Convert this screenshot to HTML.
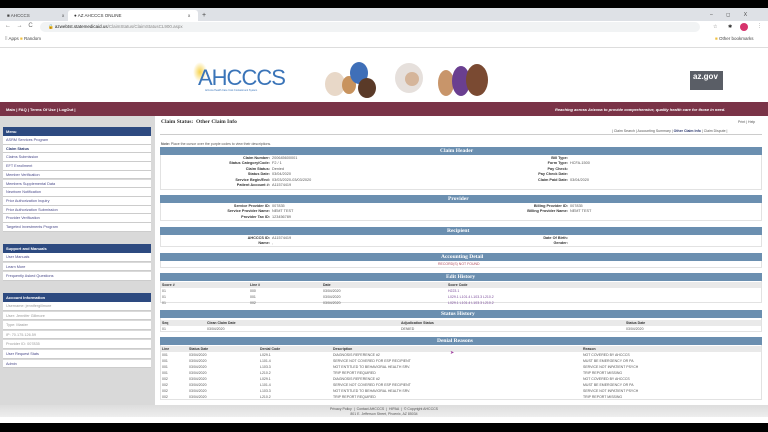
<!DOCTYPE html>
<html><head><meta charset="utf-8"><style>
*{margin:0;padding:0;box-sizing:border-box}
body{width:768px;height:432px;overflow:hidden;background:#fff;font-family:"Liberation Sans",sans-serif;position:relative;font-size:4px;color:#555}
div,span{position:absolute}
.b{font-weight:bold;color:#333}
.bar{left:160px;width:602px;height:8px;background:#6b8fb0;color:#fff;font-weight:bold;font-size:5.5px;line-height:8px;font-family:"Liberation Serif",serif}
.box{left:160px;width:602px;border:1px solid #e2e2e2;background:#fff}
.mh{left:3px;width:148px;background:#2d4a80;color:#fff;font-weight:bold;font-size:4px;line-height:9px;padding-left:3px}
.mi{left:3px;width:148px;height:8.7px;background:#fff;border-bottom:1px solid #ccc;color:#4a4a8a;font-size:3.8px;line-height:8px;padding-left:3px}
.gh{left:161px;width:600px;height:5.5px;background:#e9e9e9}
.r{text-align:right}
.red{color:#b05060}
.p{border-radius:50%}
</style></head><body>
<div style="left:0;top:0;width:768px;height:8px;background:#000"></div>
<div style="left:0;top:8px;width:768px;height:13px;background:#dee1e6"></div>
<div style="left:2px;top:10px;width:64px;height:11px;color:#444;font-size:4.5px;line-height:11px;padding-left:5px">■ AHCCCS</div>
<div style="left:62px;top:10px;font-size:4.5px;line-height:11px;color:#444">x</div>
<div style="left:68px;top:10px;width:130px;height:11px;background:#fff;border-radius:3px 3px 0 0;color:#333;font-size:4.5px;line-height:11px;padding-left:6px">● AZ AHCCCS ONLINE</div>
<div style="left:188px;top:10px;font-size:4.5px;line-height:11px;color:#444">x</div>
<div style="left:202px;top:10px;font-size:7px;line-height:11px;color:#444">+</div>
<div style="left:710px;top:10px;font-size:5px;line-height:11px;color:#444;word-spacing:12px">– ◻ X</div>
<div style="left:0;top:21px;width:768px;height:12px;background:#fff"></div>
<div style="left:5px;top:23px;font-size:6px;color:#666;word-spacing:4px">← → C</div>
<div style="left:40px;top:22px;width:660px;height:10px;background:#f1f3f4;border-radius:5px;font-size:4.5px;line-height:10px;padding-left:8px;color:#222">🔒 azwebtst.statemedicaid.us<span style="position:static;color:#888">/ClaimStatus/ClaimStatusCL900.aspx</span></div>
<div style="left:713px;top:24px;font-size:5px;color:#666">☆</div><div style="left:728px;top:24px;font-size:5px;color:#333">✱</div>
<div style="left:740px;top:23px;width:8px;height:8px;border-radius:50%;background:#d6336c"></div>
<div style="left:757px;top:23px;font-size:5px;color:#555">⋮</div>
<div style="left:5px;top:36px;font-size:4.5px;color:#444">⁞⁞ Apps <span style="position:static;color:#f0c040">■</span> Random</div>
<div style="left:715px;top:36px;font-size:4.5px;color:#444"><span style="position:static;color:#f0c040">■</span> Other bookmarks</div>
<div style="left:0;top:47px;width:768px;height:1px;background:#ddd"></div>
<!-- logos -->
<div style="left:193px;top:62px;width:14px;height:20px;border-radius:50%;background:radial-gradient(#f7d24a,#fff 70%)"></div>
<div style="left:198px;top:65px;font-size:22px;color:#3a74b8;letter-spacing:-1px">AHCCCS</div>
<div style="left:205px;top:89px;font-size:2.5px;color:#3a74b8">Arizona Health Care Cost Containment System</div>
<div class="p" style="left:325px;top:72px;width:20px;height:24px;background:#e8d8c8"></div>
<div class="p" style="left:342px;top:76px;width:14px;height:18px;background:#c8935e"></div>
<div class="p" style="left:350px;top:62px;width:18px;height:22px;background:#3f6fb8"></div>
<div class="p" style="left:358px;top:78px;width:18px;height:20px;background:#5a3a28"></div>
<div class="p" style="left:395px;top:63px;width:28px;height:30px;background:#e6e0dc"></div>
<div class="p" style="left:405px;top:72px;width:14px;height:14px;background:#d5b59a"></div>
<div class="p" style="left:438px;top:70px;width:16px;height:26px;background:#c8956a"></div>
<div class="p" style="left:452px;top:66px;width:18px;height:30px;background:#6a3f90"></div>
<div class="p" style="left:466px;top:64px;width:22px;height:32px;background:#7a4a32"></div>
<div style="left:690px;top:71px;width:33px;height:19px;background:#5a5e66;color:#fff;font-weight:bold;font-size:8px;line-height:12px;padding-left:3px;overflow:hidden">az.gov</div>
<div style="left:0;top:102px;width:768px;height:14px;background:#7a3347"></div>
<div style="left:6px;top:107px;color:#fff;font-size:4px;font-weight:bold">Main | FAQ | Terms Of Use | LogOut |</div>
<div style="left:555px;top:107px;color:#fff;font-size:4px;font-weight:bold;font-style:italic">Reaching across Arizona to provide comprehensive, quality health care for those in need.</div>
<!-- sidebar -->
<div style="left:0;top:116px;width:155px;height:290px;background:#d9d9d9"></div>
<div class="mh" style="top:127px">Menu</div>
<div class="mi" style="top:136px">ASRM Services Program</div>
<div class="mi" style="top:144.7px;font-weight:bold;color:#2d3a70">Claim Status</div>
<div class="mi" style="top:153.4px">Claims Submission</div>
<div class="mi" style="top:162.1px">EFT Enrollment</div>
<div class="mi" style="top:170.8px">Member Verification</div>
<div class="mi" style="top:179.5px">Members Supplemental Data</div>
<div class="mi" style="top:188.2px">Newborn Notification</div>
<div class="mi" style="top:196.9px">Prior Authorization Inquiry</div>
<div class="mi" style="top:205.6px">Prior Authorization Submission</div>
<div class="mi" style="top:214.3px">Provider Verification</div>
<div class="mi" style="top:223px">Targeted Investments Program</div>
<div class="mh" style="top:244px">Support and Manuals</div>
<div class="mi" style="top:253px">User Manuals</div>
<div class="mi" style="top:262.5px">Learn More</div>
<div class="mi" style="top:272px">Frequently Asked Questions</div>
<div class="mh" style="top:293px">Account Information</div>
<div class="mi" style="top:302px;color:#999">Username: jennifergillmore</div>
<div class="mi" style="top:311.6px;color:#999">User: Jennifer Gillmore</div>
<div class="mi" style="top:321.2px;color:#999">Type: Master</div>
<div class="mi" style="top:330.8px;color:#999">IP: 70.175.126.59</div>
<div class="mi" style="top:340.4px;color:#999">Provider ID: 007835</div>
<div class="mi" style="top:350px">User Request Stats</div>
<div class="mi" style="top:359.6px">Admin</div>
<!-- main -->
<div style="left:161px;top:119px;font-family:'Liberation Serif',serif;font-weight:bold;font-size:5.5px;color:#333">Claim Status:&nbsp; Other Claim Info</div>
<div style="left:160px;top:134px;width:602px;height:1px;background:#ccc"></div>
<div style="left:738px;top:120px;font-size:3.5px">Print | Help</div>
<div style="left:612px;top:129px;font-size:3.5px">| Claim Search | Accounting Summary | <b style="color:#2d3a70">Other Claim Info</b> | Claim Dispute |</div>
<div style="left:161px;top:142px;font-size:3.5px"><b>Note:</b> Place the cursor over the purple codes to view their descriptions.</div>
<div class="box" style="top:147px;height:43px"></div>
<div class="bar" style="top:147px;padding-left:280px">Claim Header</div>
<div class="r" style="left:160px;top:156px;width:110px;line-height:5.4px;font-size:3.8px"><b class="b">Claim Number:<br>Status Category/Code:<br>Claim Status:<br>Status Date:<br>Service Begin/End:<br>Patient Account #:</b></div>
<div style="left:272px;top:156px;line-height:5.4px;font-size:3.8px">200645600001<br>F2 / 1<br>Denied<br>03/04/2020<br>03/03/2020-03/03/2020<br>A11574419</div>
<div class="r" style="left:460px;top:156px;width:108px;line-height:5.4px;font-size:3.8px"><b class="b">Bill Type:<br>Form Type:<br>Pay Check:<br>Pay Check Date:<br>Claim Paid Date:</b></div>
<div style="left:570px;top:156px;line-height:5.4px;font-size:3.8px"><br>HCFA-1500<br><br><br>03/04/2020</div>
<div class="box" style="top:195px;height:26px"></div>
<div class="bar" style="top:195px;padding-left:288px">Provider</div>
<div class="r" style="left:160px;top:204px;width:110px;line-height:5.4px;font-size:3.8px"><b class="b">Service Provider ID:<br>Service Provider Name:<br>Provider Tax ID:</b></div>
<div style="left:272px;top:204px;line-height:5.4px;font-size:3.8px">007835<br>NEMT TEST<br>123456789</div>
<div class="r" style="left:460px;top:204px;width:108px;line-height:5.4px;font-size:3.8px"><b class="b">Billing Provider ID:<br>Billing Provider Name:</b></div>
<div style="left:570px;top:204px;line-height:5.4px;font-size:3.8px">007835<br>NEMT TEST</div>
<div class="box" style="top:227px;height:20px"></div>
<div class="bar" style="top:227px;padding-left:287px">Recipient</div>
<div class="r" style="left:160px;top:236px;width:110px;line-height:5.4px;font-size:3.8px"><b class="b">AHCCCS ID:<br>Name:</b></div>
<div style="left:272px;top:236px;line-height:5.4px;font-size:3.8px">A11574419<br>,</div>
<div class="r" style="left:460px;top:236px;width:108px;line-height:5.4px;font-size:3.8px"><b class="b">Date Of Birth:<br>Gender:</b></div>
<div class="box" style="top:253px;height:15px"></div>
<div class="bar" style="top:253px;padding-left:281px">Accounting Detail</div>
<div class="red" style="left:438px;top:262px;font-size:3.5px">RECORD(S) NOT FOUND</div>
<div class="box" style="top:273px;height:30px"></div>
<div class="bar" style="top:273px;padding-left:286px">Edit History</div>
<div class="gh" style="top:282px"></div>
<div style="left:162px;top:282px;font-size:3.5px;line-height:6px"><b class="b">Score #</b><br>01<br>01<br>01</div>
<div style="left:250px;top:282px;font-size:3.5px;line-height:6px"><b class="b">Line #</b><br>000<br>001<br>002</div>
<div style="left:323px;top:282px;font-size:3.5px;line-height:6px"><b class="b">Date</b><br>03/04/2020<br>03/04/2020<br>03/04/2020</div>
<div style="left:448px;top:282px;font-size:3.5px;line-height:6px;color:#7a4a9a"><b class="b">Score Code</b><br>H223.1<br>L029.1 L101.4 L103.3 L210.2<br>L029.1 L101.4 L103.3 L210.2</div>
<div class="box" style="top:310px;height:22px"></div>
<div class="bar" style="top:310px;padding-left:281px">Status History</div>
<div class="gh" style="top:320px"></div>
<div style="left:162px;top:320px;font-size:3.5px;line-height:6px"><b class="b">Seq</b><br>01</div>
<div style="left:207px;top:320px;font-size:3.5px;line-height:6px"><b class="b">Clean Claim Date</b><br>03/04/2020</div>
<div style="left:401px;top:320px;font-size:3.5px;line-height:6px"><b class="b">Adjudication Status</b><br>DENIED</div>
<div style="left:626px;top:320px;font-size:3.5px;line-height:6px"><b class="b">Status Date</b><br>03/04/2020</div>
<div class="box" style="top:337px;height:63px"></div>
<div class="bar" style="top:337px;padding-left:277px">Denial Reasons</div>
<div class="gh" style="top:346px"></div>
<div style="left:162px;top:346px;font-size:3.5px;line-height:6px"><b class="b">Line</b><br>001<br>001<br>001<br>001<br>002<br>002<br>002<br>002</div>
<div style="left:189px;top:346px;font-size:3.5px;line-height:6px"><b class="b">Status Date</b><br>03/04/2020<br>03/04/2020<br>03/04/2020<br>03/04/2020<br>03/04/2020<br>03/04/2020<br>03/04/2020<br>03/04/2020</div>
<div style="left:260px;top:346px;font-size:3.5px;line-height:6px"><b class="b">Denial Code</b><br>L029.1<br>L101.4<br>L103.3<br>L210.2<br>L029.1<br>L101.4<br>L103.3<br>L210.2</div>
<div style="left:333px;top:346px;font-size:3.5px;line-height:6px"><b class="b">Description</b><br>DIAGNOSIS REFERENCE #2<br>SERVICE NOT COVERED FOR ESP RECIPIENT<br>NOT ENTITLED TO BEHAVIORAL HEALTH SRV.<br>TRIP REPORT REQUIRED<br>DIAGNOSIS REFERENCE #2<br>SERVICE NOT COVERED FOR ESP RECIPIENT<br>NOT ENTITLED TO BEHAVIORAL HEALTH SRV.<br>TRIP REPORT REQUIRED</div>
<div style="left:583px;top:346px;font-size:3.5px;line-height:6px"><b class="b">Reason</b><br>NOT COVERED BY AHCCCS<br>MUST BE EMERGENCY OR PA<br>SERVICE NOT INPATIENT PSYCH<br>TRIP REPORT MISSING<br>NOT COVERED BY AHCCCS<br>MUST BE EMERGENCY OR PA<br>SERVICE NOT INPATIENT PSYCH<br>TRIP REPORT MISSING</div>
<div style="left:450px;top:350px;color:#a040a0;font-size:5px">➤</div>
<div style="left:0;top:405px;width:768px;height:12px;background:linear-gradient(#ddd,#eee)"></div>
<div style="left:0;top:417px;width:768px;height:7px;background:#fff"></div>
<div style="left:0;top:423px;width:768px;height:9px;background:#000"></div>
<div style="left:314px;top:407px;font-size:3.5px;line-height:5px;text-align:center;width:140px">Privacy Policy &nbsp;|&nbsp; Contact AHCCCS &nbsp;|&nbsp; HIPAA &nbsp;|&nbsp; © Copyright AHCCCS<br>801 E. Jefferson Street, Phoenix, AZ 85034</div>
</body></html>
